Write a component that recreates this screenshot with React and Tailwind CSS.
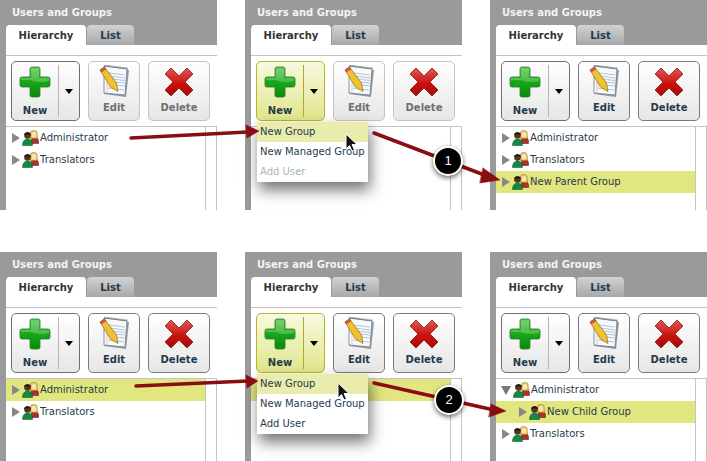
import React from "react";

const F = { fontFamily: '"DejaVu Sans", Verdana, sans-serif' };

function PlusIcon() {
  return (
    <svg width="32" height="32" viewBox="0 0 32 32">
      <defs>
        <linearGradient id="pg" x1="0" y1="0" x2="0" y2="1">
          <stop offset="0" stopColor="#66c95f" />
          <stop offset="0.5" stopColor="#16a818" />
          <stop offset="1" stopColor="#0c8a10" />
        </linearGradient>
      </defs>
      <path d="M13 1h6a2 2 0 0 1 2 2V11h8a2 2 0 0 1 2 2v6a2 2 0 0 1-2 2h-8v8a2 2 0 0 1-2 2h-6a2 2 0 0 1-2-2v-8H3a2 2 0 0 1-2-2v-6a2 2 0 0 1 2-2h8V3a2 2 0 0 1 2-2z" fill="url(#pg)" stroke="#2a7a2c" strokeWidth="0.8" />
      <path d="M12 2.500h8v9.500h10v3c-8 2-14 1-18-1H2v-2h10z" fill="#a6e39b" opacity="0.35" />
    </svg>
  );
}

function NoteIcon() {
  return (
    <svg width="31" height="33" viewBox="0 0 31 33">
      <path d="M5 2l25 3-3 27-22-3z" fill="#8f9aa3" />
      <path d="M5 1l23 3-2 26-21-2z" fill="#f7f9fb" stroke="#6f7a83" strokeWidth="0.8" />
      <path d="M5.500 0.500l23 3" stroke="#5a646c" strokeWidth="1.800" strokeDasharray="1 1" />
      <g stroke="#9fb8cf" strokeWidth="0.8">
        <path d="M10 8l16 2M11 11l15 2M13 14l13 1.500M15 17l11 1M16 20l10 1M9 23l16 2" />
      </g>
      <path d="M8 6v22" stroke="#e49a9a" strokeWidth="0.6" />
      <path d="M1 5l4.500-3 12 16 1.500 8.500-7.500-4.500z" fill="#f0c22f" stroke="#8c6a12" strokeWidth="0.7" />
      <path d="M1 5l4.500-3 1.500 2-4.500 3z" fill="#d9574f" stroke="#8f2a25" strokeWidth="0.4" />
    </svg>
  );
}

function XIcon() {
  return (
    <svg width="30" height="30" viewBox="0 0 30 30">
      <defs>
        <linearGradient id="xg" x1="0" y1="0" x2="0" y2="1">
          <stop offset="0" stopColor="#dc5c58" />
          <stop offset="0.55" stopColor="#cc1210" />
          <stop offset="1" stopColor="#a00b0a" />
        </linearGradient>
      </defs>
      <path d="M7 1l8 8 8-8 6 6-8 8 8 8-6 6-8-8-8 8-6-6 8-8-8-8z" fill="url(#xg)" stroke="#8f1513" strokeWidth="0.8" strokeLinejoin="round" />
    </svg>
  );
}

function UsersIcon() {
  return (
    <svg width="17" height="16" viewBox="0 0 17 16" className="shrink-0">
      <path d="M9 10.500c0-2 1.500-3 3.500-3s4 1 4 3.500v2.500H10z" fill="#a8322c" stroke="#5c1512" strokeWidth="0.5" />
      <path d="M8.500 2c1-2 5.500-2 6.500 0l.5 6.500h-7.500z" fill="#e9c75c" stroke="#8a6c1f" strokeWidth="0.5" />
      <ellipse cx="12" cy="4.800" rx="2.200" ry="2.700" fill="#f8e6bb" />
      <path d="M0.500 15.500c0-4 2-6.500 5-6.500s5 2.500 5 6.500z" fill="#118a42" stroke="#0a4d26" strokeWidth="0.5" />
      <circle cx="5.500" cy="5.500" r="3.300" fill="#5a3420" />
      <path d="M2.200 5c0-3.500 6.600-4 6.600 0-2-1-4.500-1-6.600 0z" fill="#1c1410" />
    </svg>
  );
}

function TreeRow({ label, open, indent, selected }) {
  return (
    <div className={`h-[22px] flex items-center text-[10px] text-[#1f3b4d] whitespace-nowrap ${selected ? "bg-[#e2e67f]" : ""}`}>
      <div className={indent ? "w-[23px] shrink-0" : "w-[6px] shrink-0"} />
      {open ? (
        <span className="w-0 h-0 mr-[2px] ml-[-1px] border-l-[5px] border-r-[5px] border-t-[9px] border-l-transparent border-r-transparent border-t-[#777]" />
      ) : (
        <span className="w-0 h-0 mr-[2px] border-t-[5px] border-b-[5px] border-l-[8px] border-t-transparent border-b-transparent border-l-[#888]" />
      )}
      <UsersIcon />
      <span className="ml-[1px] mt-[-2px]">{label}</span>
    </div>
  );
}

function Panel({ rows, active, enabled, menu, menuDisabled, coveredRow }) {
  const actionBorder = enabled ? "border-[#7a7a7a]" : "border-[#c4c4c4]";
  const actionText = enabled ? "text-[#1f3b4d]" : "text-[#6f6f6f]";
  return (
    <div className="relative h-full flex flex-col bg-[#9a9a9a]" style={F}>
      <div className="h-[25px] pl-[12px] pt-[6px] text-[10px] leading-[13px] font-bold text-[#f4f4f4]">Users and Groups</div>
      <div className="h-[20px] flex ml-[6px]">
        <div className="w-[80px] h-[20px] pt-[1px] bg-white rounded-t-[4px] flex items-center justify-center text-[10px] font-bold text-[#333]">Hierarchy</div>
        <div className="w-[47px] ml-[1px] h-[20px] rounded-t-[4px] bg-gradient-to-b from-[#d2d2d2] to-[#a8a8a8] flex items-center justify-center text-[10px] font-bold text-[#1f3b4d]">List</div>
      </div>
      <div className="flex-1 ml-[6px] bg-white flex flex-col min-h-0">
        <div className="h-[11px] border-b border-[#c4c4c4]" />
        <div className="h-[70px] pl-[5px] pt-[5px] flex items-start gap-2">
          <div className={`w-[69px] h-[60px] rounded-[5px] border flex ${active ? "border-[#b5b82a] bg-gradient-to-b from-[#f8f9de] to-[#e2e68a]" : "border-[#6e6e6e] bg-gradient-to-b from-[#ffffff] to-[#e6e6e6]"}`}>
            <div className="w-[46px] flex flex-col items-center pt-[4px]">
              <PlusIcon />
              <span className="mt-[6px] text-[10px] leading-[13px] font-bold text-[#1f3b4d]">New</span>
            </div>
            <div className={`w-px my-[3px] ${active ? "bg-[#a9ac2a]" : "bg-[#b5b5b5]"}`} />
            <div className="flex-1 flex items-center justify-center">
              <span className="w-0 h-0 border-l-[4px] border-r-[4px] border-t-[5px] border-l-transparent border-r-transparent border-t-black" />
            </div>
          </div>
          <div className={`w-[52px] h-[60px] rounded-[5px] border ${actionBorder} bg-gradient-to-b from-[#ffffff] to-[#e6e6e6] flex flex-col items-center pt-[3px]`}>
            <NoteIcon />
            <span className={`mt-[3px] text-[10px] leading-[13px] font-bold ${actionText}`}>Edit</span>
          </div>
          <div className={`w-[62px] h-[60px] rounded-[5px] border ${actionBorder} bg-gradient-to-b from-[#ffffff] to-[#e6e6e6] flex flex-col items-center pt-[5px]`}>
            <XIcon />
            <span className={`mt-[4px] text-[10px] leading-[13px] font-bold ${actionText}`}>Delete</span>
          </div>
        </div>
        <div className="flex-1 flex border-t border-[#c4c4c4]">
          <div className="w-[200px] border-r border-[#c4c4c4]">
            {coveredRow && <div className="h-[22px] bg-[#e2e67f]" />}
            {rows.map((r) => (
              <TreeRow key={r.label} {...r} />
            ))}
          </div>
          <div className="flex-1 border-r border-[#c4c4c4]" />
        </div>
      </div>
      {menu && (
        <div className="absolute left-[12px] top-[122px] w-[111px] bg-white text-[10px] text-[#1f3b4d] whitespace-nowrap shadow-[2px_8px_14px_rgba(0,0,0,0.55)] z-10">
          <div className="h-[20px] pl-[3px] pb-[2px] flex items-center bg-[#e9ecac]">New Group</div>
          <div className="h-[20px] pl-[3px] pb-[2px] flex items-center">New Managed Group</div>
          <div className={`h-[20px] pl-[3px] pb-[2px] flex items-center ${menuDisabled ? "text-[#a9b4bb]" : ""}`}>Add User</div>
        </div>
      )}
    </div>
  );
}

function Badge({ n, className }) {
  return (
    <div className={`absolute w-[30px] h-[30px] rounded-full bg-black border-2 border-white shadow-[0_2px_5px_rgba(0,0,0,0.6)] flex items-center justify-center text-white text-[13px] z-30 ${className}`} style={{ fontFamily: '"Liberation Sans", sans-serif' }}>
      {n}
    </div>
  );
}

function Cursor({ x, y }) {
  return (
    <path transform={`translate(${x} ${y})`} d="M0 0v15l3.500-3.500 2.500 5.500 2.500-1-2.500-5.500h5z" fill="#111" stroke="#fff" strokeWidth="1" />
  );
}

export default function App() {
  const base = [
    { label: "Administrator" },
    { label: "Translators" },
  ];
  return (
    <div className="relative w-[707px] h-[461px] bg-white overflow-hidden">
      <div className="flex flex-col gap-[42px]">
        <div className="h-[210px] flex gap-[28px]">
          <div className="w-[217px]"><Panel rows={base} /></div>
          <div className="w-[217px]"><Panel rows={[]} active menu menuDisabled /></div>
          <div className="w-[217px]"><Panel rows={[...base, { label: "New Parent Group", selected: true }]} enabled /></div>
        </div>
        <div className="h-[209px] flex gap-[28px]">
          <div className="w-[217px]"><Panel rows={[{ label: "Administrator", selected: true }, base[1]]} enabled /></div>
          <div className="w-[217px]"><Panel rows={[]} coveredRow active enabled menu /></div>
          <div className="w-[217px]"><Panel rows={[{ label: "Administrator", open: true }, { label: "New Child Group", indent: true, selected: true }, base[1]]} enabled /></div>
        </div>
      </div>
      <svg className="absolute inset-0 z-20 pointer-events-none" width="707" height="461" viewBox="0 0 707 461">
        <g stroke="#8a0d14" strokeWidth="3.500" fill="#8a0d14" strokeLinecap="round">
          <path d="M131 138L248 132" fill="none" />
          <path d="M246 125L259 131L247 138z" strokeWidth="0.5" />
          <path d="M374 133L487 176" fill="none" />
          <path d="M483 168L500 180L480 183z" strokeWidth="0.5" />
          <path d="M136 386L248 381" fill="none" />
          <path d="M246 375L258 381L247 388z" strokeWidth="0.5" />
          <path d="M374 383L494 410" fill="none" />
          <path d="M491 404L506 411L489 417z" strokeWidth="0.5" />
        </g>
        <Cursor x={346} y={134} />
        <Cursor x={338} y={383} />
      </svg>
      <Badge n="1" className="left-[433px] top-[146px]" />
      <Badge n="2" className="left-[434px] top-[385px]" />
    </div>
  );
}
